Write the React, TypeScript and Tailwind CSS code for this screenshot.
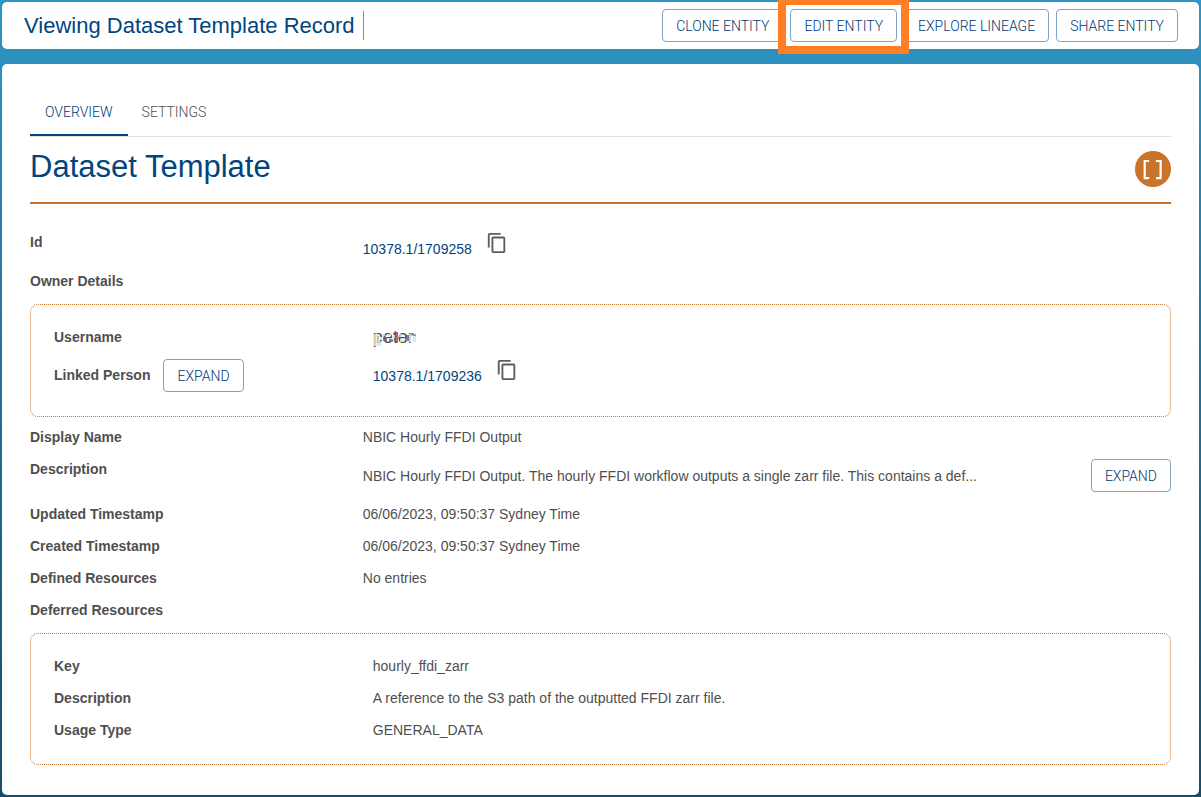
import type { ReactNode } from "react";

const outlineButton =
  "h-[33px] shrink-0 cursor-pointer rounded-[4px] border border-[#7fa3c4] bg-white px-[13px] font-[Roboto,sans-serif] text-sm font-light text-[#003a75] hover:bg-[#f2f6fa]";

function OutlineButton({ children }: { children: ReactNode }) {
  return (
    <button type="button" className={outlineButton}>
      {children}
    </button>
  );
}

function Row({ label, action, children }: { label: string; action?: ReactNode; children?: ReactNode }) {
  return (
    <div className="grid grid-cols-[7fr_17fr] py-[6px] leading-5">
      <dt className="flex items-start gap-[13px] font-bold">
        {action ? <span className="pt-[6px]">{label}</span> : label}
        {action}
      </dt>
      <dd>{children}</dd>
    </div>
  );
}

function HandleLink({ id }: { id: string }) {
  return (
    <div className="flex h-[27px] items-start gap-[14px]">
      <a href={`https://hdl.handle.net/${id}`} className="pt-[7px] text-[#00457f]">
        {id}
      </a>
      <button type="button" aria-label={`Copy ${id}`} className="cursor-pointer text-[#5c5c5c]">
        <svg viewBox="0 0 24 24" className="size-[22px]" fill="currentColor">
          <path d="M16 1H4c-1.100 0-2 .9-2 2v14h2V3h12V1zm3 4H8c-1.100 0-2 .9-2 2v14c0 1.100.9 2 2 2h11c1.100 0 2-.9 2-2V7c0-1.100-.9-2-2-2zm0 16H8V7h11v14z" />
        </svg>
      </button>
    </div>
  );
}

// Coloured blocks [x, y, width, height, colour] that obscure the owner's name.
const mosaic: [number, number, number, number, string][] = [
  [0, 2, 3, 12, "#ffe6b3"],
  [3, 4, 2, 5, "#8fb4e0"],
  [3, 9, 4, 5, "#b8e6ff"],
  [5, 5, 4, 3, "#ffffff"],
  [8, 2, 3, 2, "#b8e6ff"],
  [9, 5, 4, 4, "#7a5a85"],
  [13, 2, 4, 2, "#ffe6b3"],
  [15, 7, 4, 3, "#4a6fb0"],
  [19, 3, 2, 3, "#b8e6ff"],
  [21, 0, 3, 10, "#8c4a7a"],
  [25, 2, 3, 3, "#b8e6ff"],
  [26, 7, 4, 3, "#ffe6b3"],
  [31, 3, 4, 6, "#5a5aa0"],
  [35, 2, 2, 8, "#ffe6b3"],
  [38, 2, 4, 2, "#5f8fc8"],
  [39, 4, 3, 6, "#b8e6ff"],
];

function ObscuredName({ children }: { children: ReactNode }) {
  return (
    <span className="relative inline-block h-5 align-top text-lg leading-5">
      {children}
      <svg viewBox="0 0 43 14" className="absolute top-[5px] left-px h-[14px] w-[43px]" shapeRendering="crispEdges" aria-hidden="true">
        {mosaic.map(([x, y, width, height, fill]) => (
          <rect key={`${x}-${y}`} x={x} y={y} width={width} height={height} fill={fill} fillOpacity="0.8" />
        ))}
      </svg>
    </span>
  );
}

function DottedPanel({ children }: { children: ReactNode }) {
  return (
    <dl className="rounded-[8px] border border-dotted border-[#c9742b] px-[23px] pt-4 pb-[18px]">
      {children}
    </dl>
  );
}

export default function App() {
  return (
    <div className="flex min-h-screen flex-col gap-[15px] bg-linear-to-b from-[#2e95c4] to-[#1b4c66] p-[2px] font-['Liberation_Sans',Arial,sans-serif] text-sm text-[#4f4f4f]">
      <header className="flex h-[47px] items-center justify-between rounded-[5px] bg-white pr-[21px] pl-[22px]">
        <div className="flex items-center gap-2">
          <h1 className="text-[22px] leading-7 text-[#00457f]">Viewing Dataset Template Record</h1>
          <span className="h-[29px] w-px bg-[#8c8c8c]" />
        </div>
        <div className="flex items-center gap-[7px]">
          <OutlineButton>CLONE ENTITY</OutlineButton>
          <div className="relative flex">
            <OutlineButton>EDIT ENTITY</OutlineButton>
            <span className="pointer-events-none absolute -inset-x-[12px] -inset-y-[12px] border-8 border-[#ff7f27] outline-4 -outline-offset-12 outline-white" />
          </div>
          <OutlineButton>EXPLORE LINEAGE</OutlineButton>
          <OutlineButton>SHARE ENTITY</OutlineButton>
        </div>
      </header>

      <main className="grow rounded-[5px] bg-white px-7 pt-6 pb-[29px]">
        <div role="tablist" className="flex h-[49px] border-b border-[#e0e0e0] font-[Roboto,sans-serif] font-light">
          <button type="button" role="tab" aria-selected="true" className="h-12 border-b-2 border-[#00457f] px-[15px] pt-[2px] text-[#003a75]">
            OVERVIEW
          </button>
          <button type="button" role="tab" aria-selected="false" className="h-12 border-b-2 border-transparent px-[14px] pt-[2px] text-[#4f4f4f]">
            SETTINGS
          </button>
        </div>

        <div className="flex h-[67px] items-start justify-between border-b-2 border-[#c9742b] pt-[14px]">
          <h2 className="text-[31px] leading-8 text-[#00457f]">Dataset Template</h2>
          <svg viewBox="0 0 36 36" className="size-9" role="img" aria-label="Dataset template">
            <circle cx="18" cy="18" r="18" fill="#c9742b" />
            <path d="M14.200 10H9.700V27.200H14.200M21 10H25.600V27.200H21" fill="none" stroke="#fff" strokeWidth="2.200" />
          </svg>
        </div>

        <dl className="pt-[22px]">
          <Row label="Id">
            <HandleLink id="10378.1/1709258" />
          </Row>
          <Row label="Owner Details" />
        </dl>
        <div className="pt-[7px] pb-1">
          <DottedPanel>
            <Row label="Username">
              <ObscuredName>peter</ObscuredName>
            </Row>
            <Row label="Linked Person" action={<OutlineButton>EXPAND</OutlineButton>}>
              <HandleLink id="10378.1/1709236" />
            </Row>
          </DottedPanel>
        </div>
        <dl>
          <Row label="Display Name">NBIC Hourly FFDI Output</Row>
          <Row label="Description">
            <div className="flex items-center justify-between">
              <span>
                NBIC Hourly FFDI Output. The hourly FFDI workflow outputs a single zarr file. This contains a def...
              </span>
              <OutlineButton>EXPAND</OutlineButton>
            </div>
          </Row>
          <Row label="Updated Timestamp">06/06/2023, 09:50:37 Sydney Time</Row>
          <Row label="Created Timestamp">06/06/2023, 09:50:37 Sydney Time</Row>
          <Row label="Defined Resources">No entries</Row>
          <Row label="Deferred Resources" />
        </dl>
        <div className="pt-[7px]">
          <DottedPanel>
            <Row label="Key">hourly_ffdi_zarr</Row>
            <Row label="Description">A reference to the S3 path of the outputted FFDI zarr file.</Row>
            <Row label="Usage Type">GENERAL_DATA</Row>
          </DottedPanel>
        </div>
      </main>
    </div>
  );
}
